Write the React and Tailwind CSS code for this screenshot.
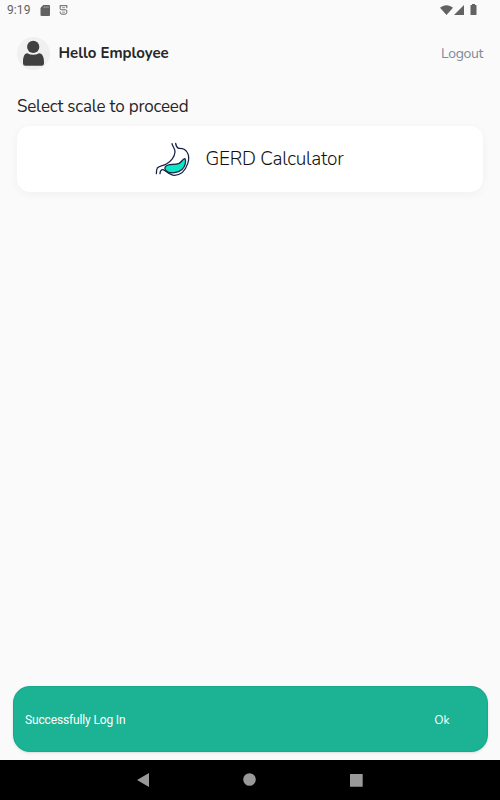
import React, { useState } from "react";

const StatusBar = () => (
  <div className="flex h-5 items-center justify-between pl-[7px] pr-[23px] text-[#626262]">
    <div className="flex items-center">
      <span className="w-[33px] font-[Roboto] text-[12px] leading-5 tracking-[0.1px]">9:19</span>
      <svg className="h-[11px] w-[10px]" viewBox="0 0 10 11" fill="currentColor">
        <path d="M3.2 0H9q1 0 1 1v9q0 1-1 1H1.5q-1 0-1-1V3z" />
        <path d="M4.2 1.3v1.8M6.1 1.3v1.8M8 1.3v1.8" stroke="#fafafa" strokeWidth="0.5" />
      </svg>
      <svg className="ml-[9px] h-[10px] w-[9px]" viewBox="0 0 9 10" fill="none" stroke="currentColor">
        <path d="M.8.7h7.4M1.2.7v3.1q0 1 1 1h4.6q1 0 1 1v1.6q0 1.8-2 1.8H3.2q-2 0-2-1.8V6.6M7.8.7v2.5" strokeWidth="1" />
        <path d="M3 2.7h3M3 7.1h3" strokeWidth="0.7" />
      </svg>
    </div>
    <div className="flex items-center pb-px">
      <svg className="h-[10px] w-[13px]" viewBox="0 0 13 10" fill="currentColor">
        <path d="M0 2.7C3.8-.7 9.2-.7 13 2.7L6.5 10z" />
      </svg>
      <svg className="ml-[1px] h-[10px] w-[10px]" viewBox="0 0 10 10" fill="currentColor">
        <path d="M10 0v10H0z" />
      </svg>
      <svg className="ml-[6px] h-[11px] w-[7px]" viewBox="0 0 7 11" fill="currentColor">
        <path d="M2 0h3v1h1q.5 0 .5.5v9q0 .5-.5.5H1q-.5 0-.5-.5v-9Q.5 1 1 1h1z" />
      </svg>
    </div>
  </div>
);

const Avatar = () => (
  <svg className="h-[33px] w-[33px]" viewBox="0 0 33 33">
    <circle cx="16.5" cy="16.5" r="16.5" fill="#f0f0f0" />
    <g fill="#404040">
      <circle cx="16.2" cy="9.9" r="6.1" />
      <path d="M10.3 16.2q5.9 3.2 11.8 0C25.5 16.5 27 20 27 25v1.5q0 2.3-2.3 2.3H8.3Q6 28.8 6 26.5V25c0-5 1.2-8.5 4.3-8.8z" />
    </g>
  </svg>
);

const StomachIcon = () => (
  <svg className="h-9 w-9" viewBox="42 33 108 108" fill="none" strokeLinecap="round" strokeLinejoin="round">
    <g stroke="#172348" strokeWidth="3.8">
      <path d="M96 41c1 8 10 15 9 25-1 14-12 29-26 36-9 6-21 4-27 12-3 5-3 10-3 17" />
      <path d="M107 40c1 8 4 13 9 15 10-1 20 3 25 11 6 9 6 23 2 35-6 18-19 34-39 35-15 1-24-13-35-17-5-1-9 4-9 12" />
      <path
        d="M134 86c-6 1-9 10-17 14-11 5-23 2-33 5-9 3-12 10-7 16 6 7 16 8 26 7 18-2 30-13 33-27 1-7 1-15-2-15z"
        fill="#10e6c3"
      />
    </g>
  </svg>
);

const Header = () => (
  <header className="mt-[17px] flex h-[33px] items-center">
    <Avatar />
    <h1 className="ml-[8.5px] flex-1 text-[15px] font-bold text-[#262626]">
      Hello Employee
    </h1>
    <button className="text-[14px] tracking-[-0.35px] text-[#7e8b9b]">Logout</button>
  </header>
);

const Snackbar = ({ message, onClose }) => (
  <div className="mx-[12.5px] mb-2 flex h-[66px] items-center justify-between rounded-[17px] border border-[#16a386]/60 bg-[#1cb294] pt-0.5 pl-[11.5px] pr-[37px] text-white shadow-sm">
    <span className="font-[Roboto] text-[12px] tracking-[-0.15px]">{message}</span>
    <button onClick={onClose} className="pb-px text-[12px]">
      Ok
    </button>
  </div>
);

const NavigationBar = () => (
  <nav className="flex h-10 items-center bg-black px-[137px]">
    <svg className="h-[14px] w-[226px]" viewBox="0 0 226 14" fill="#999999">
      <path d="M0 7L12 0v14z" />
      <circle cx="112.5" cy="6.5" r="6.3" />
      <rect x="213" y="1" width="12.7" height="12.7" rx="0.5" />
    </svg>
  </nav>
);

const App = () => {
  const [showMessage, setShowMessage] = useState(true);

  return (
    <div className="flex h-screen flex-col bg-[#fafafa] font-['Nunito','Lato',sans-serif]">
      <StatusBar />
      <main className="flex-1 px-[17px]">
        <Header />
        <h2 className="mt-[25px] text-[17px] leading-6 tracking-[-0.19px] text-[#262626]">
          Select scale to proceed
        </h2>
        <button className="mt-[7px] flex h-[66px] w-full items-center justify-center rounded-[13px] bg-white pr-[3px] shadow-[0_2px_10px_rgba(0,0,0,0.045)]">
          <StomachIcon />
          <span className="ml-4 text-[19px] font-light tracking-[-0.23px] text-[#111111]">GERD Calculator</span>
        </button>
      </main>
      {showMessage && (
        <Snackbar message="Successfully Log In" onClose={() => setShowMessage(false)} />
      )}
      <NavigationBar />
    </div>
  );
};

export default App;
